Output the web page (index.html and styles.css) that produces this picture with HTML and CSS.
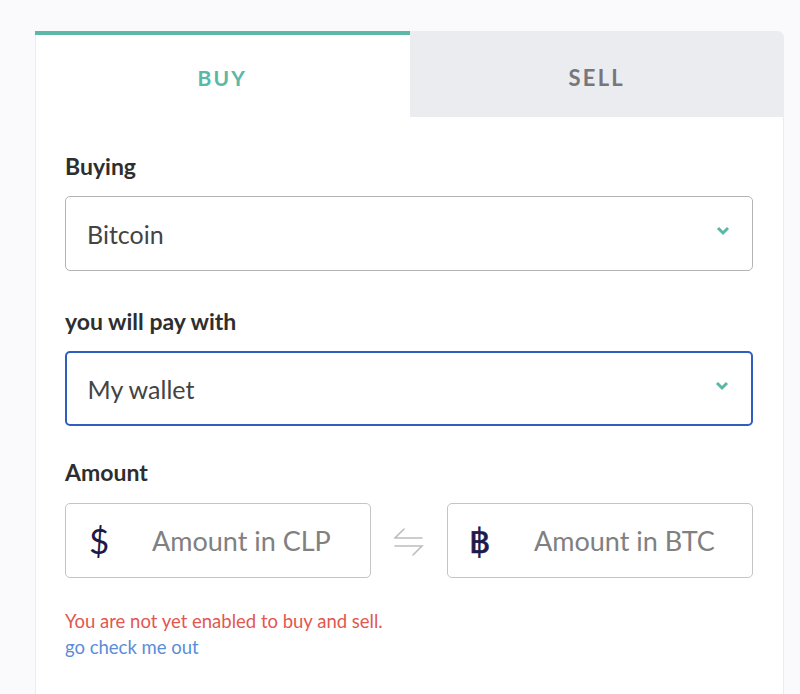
FILE: index.html
```html
<!DOCTYPE html>
<html>
<head>
<meta charset="utf-8">
<link rel="stylesheet" href="styles.css">
</head>
<body>
<div class="card">
  <div class="tabs">
    <div class="tab tab-active">BUY</div>
    <div class="tab tab-inactive">SELL</div>
  </div>
  <div class="content">
    <div class="label">Buying</div>
    <div class="select">
      <span class="select-value">Bitcoin</span>
      <svg class="chevron" width="14" height="10" viewBox="0 0 14 10"><polyline points="2,2 7,7 12,2" fill="none" stroke="#5bb8a6" stroke-width="3"/></svg>
    </div>
    <div class="label">you will pay with</div>
    <div class="select select-focus">
      <span class="select-value">My wallet</span>
      <svg class="chevron" width="14" height="10" viewBox="0 0 14 10"><polyline points="2,2 7,7 12,2" fill="none" stroke="#5bb8a6" stroke-width="3"/></svg>
    </div>
    <div class="label label-amount">Amount</div>
    <div class="amounts">
      <div class="amount-box">
        <span class="cur cur-dollar">$</span>
        <span class="placeholder">Amount in CLP</span>
      </div>
      <div class="swap">
        <svg width="30" height="30" viewBox="0 0 30 30"><g fill="none" stroke="#bdbdbd" stroke-width="1.6" stroke-linecap="round"><polyline points="10,2 1,11 28,11"/><polyline points="1,19 28,19 19,28"/></g></svg>
      </div>
      <div class="amount-box">
        <span class="cur cur-btc">฿</span>
        <span class="placeholder">Amount in BTC</span>
      </div>
    </div>
    <div class="error">You are not yet enabled to buy and sell.</div>
    <a class="link" href="#">go check me out</a>
  </div>
</div>
</body>
</html>
```

FILE: styles.css
```css
html, body {
  margin: 0;
  padding: 0;
  background: #fafafc;
  font-family: Lato, "Noto Sans", sans-serif;
}
body {
  padding: 31px 16px 0 35px;
}
.card {
  width: 749px;
  height: 680px;
  background: #fff;
  border-left: 1px solid #ececef;
  border-right: 1px solid #ececef;
  border-top-right-radius: 7px;
  box-sizing: border-box;
}
.tabs {
  display: flex;
  height: 86px;
}
.tab {
  flex: 1;
  display: flex;
  align-items: center;
  justify-content: center;
  font-weight: 700;
  font-size: 21px;
  letter-spacing: 2.2px;
}
.tab-active {
  color: #5bb8a6;
  border-top: 4px solid #5bb8a6;
  padding-top: 2px;
  margin-left: -1px;
}
.tab-inactive {
  color: #77777b;
  background: #ebecef;
  border-top-right-radius: 7px;
  margin-right: -1px;
  padding-top: 6px;
  font-size: 22px;
}
.content {
  padding: 36px 30px 0 29px;
}
.label {
  font-size: 23px;
  font-weight: 700;
  color: #2e2e2e;
  line-height: 26px;
  margin-bottom: 17px;
}
.label-amount {
  margin-top: -1px;
  margin-bottom: 18px;
}
.select {
  height: 75px;
  box-sizing: border-box;
  border: 1.5px solid #b4b4b4;
  border-radius: 5px;
  display: flex;
  align-items: center;
  justify-content: space-between;
  padding: 0 22px 0 21px;
  margin-bottom: 37px;
}
.select-focus {
  border: 2px solid #2e5fbf;
  padding-left: 20.5px;
  margin-bottom: 34px;
}
.select-value {
  font-size: 25px;
  color: #444;
}
.chevron {
  display: block;
  margin-top: -6px;
}
.amounts {
  display: grid;
  grid-template-columns: 1fr 76px 1fr;
  height: 75px;
}
.amount-box {
  border: 1.5px solid #c4c4c4;
  border-radius: 5px;
  display: flex;
  align-items: center;
  position: relative;
}
.cur {
  width: 86px;
  padding-left: 23px;
  box-sizing: border-box;
  color: #1d1a4a;
  font-size: 33px;
  line-height: 1;
}
.cur-dollar {
  font-family: Lato, sans-serif;
  font-size: 35px;
}
.cur-btc {
  font-family: "DejaVu Sans", sans-serif;
  font-size: 34px;
  font-weight: 400;
  padding-left: 21px;
  -webkit-text-stroke: 0.6px #1d1a4a;
}
.placeholder {
  font-size: 27px;
  color: #808080;
}
.swap {
  display: flex;
  align-items: center;
  justify-content: center;
  padding-top: 2px;
}
.swap svg {
  display: block;
}
.error {
  margin-top: 30px;
  font-size: 18.5px;
  line-height: 26px;
  color: #e2574f;
}
.link {
  display: block;
  font-size: 18.5px;
  line-height: 26px;
  color: #5a8dd8;
  text-decoration: none;
}
```
